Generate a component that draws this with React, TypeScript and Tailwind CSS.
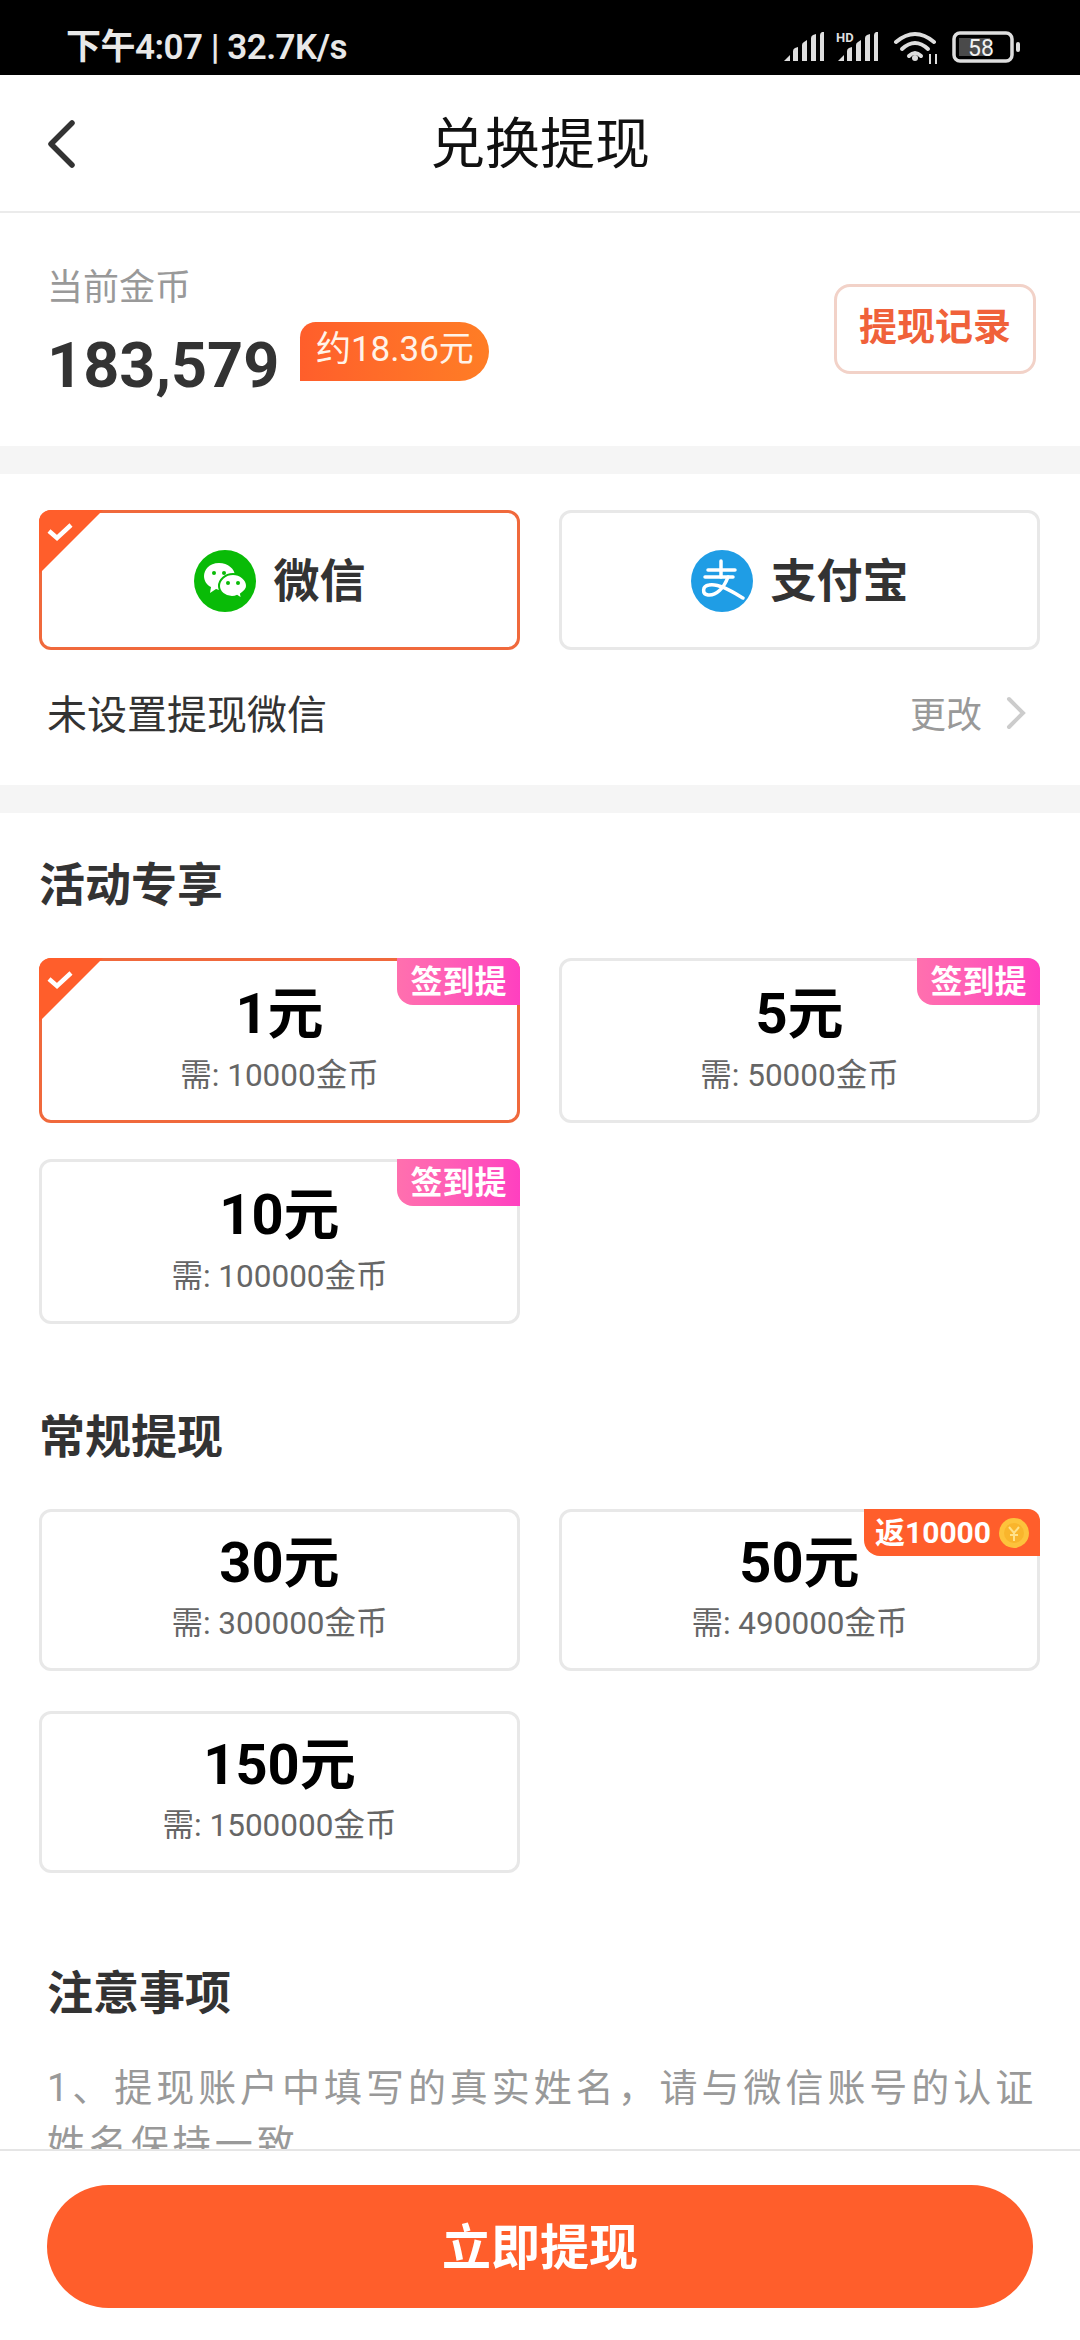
import type { ReactNode } from 'react'

const font = 'font-["Roboto","Noto_Sans_CJK_SC",sans-serif]'

function SignalBars({ x = 0 }: { x?: number }) {
  return (
    <g fill="#dedede" transform={`translate(${x} 0)`}>
      <path d="M0 29 L6 23 V29 Z" />
      <path d="M9 29 V19 Q9 17 11 16 L14 15 V29 Z" />
      <path d="M18 29 V13 Q18 11 20 10 L23 8 V29 Z" />
      <path d="M27 29 V6 Q27 4 29 3 L32 2 V29 Z" />
      <path d="M36 29 V3 Q36 1 38 0 L40 0 V29 Z" />
    </g>
  )
}

function StatusIcons() {
  return (
    <svg width="240" height="40" viewBox="0 0 240 40" className="shrink-0">
      <g transform="translate(4 2)">
        <SignalBars />
      </g>
      <g transform="translate(58 2)">
        <SignalBars />
      </g>
      <text x="56" y="12" fill="#dedede" fontSize="13" fontWeight="700" fontFamily="Roboto, sans-serif">
        HD
      </text>
      <g fill="none" stroke="#dedede" strokeWidth="4" strokeLinecap="round">
        <path d="M116 12 Q135 -4 154 12" />
        <path d="M122 19 Q135 7 148 19" />
        <path d="M129 26 Q135 20 141 26" />
      </g>
      <circle cx="135" cy="28" r="3" fill="#dedede" />
      <path d="M150 24 V34 M156 24 V34" stroke="#dedede" strokeWidth="2" />
      <rect x="174" y="3" width="58" height="28" rx="6" fill="none" stroke="#dedede" strokeWidth="3.5" />
      <rect x="179" y="8" width="31" height="18" fill="#4a4a4a" />
      <rect x="236" y="12" width="4" height="10" rx="2" fill="#dedede" />
      <text x="188" y="26" fill="#f2f2f2" fontSize="23" fontFamily="Roboto, sans-serif">
        58
      </text>
    </svg>
  )
}

function WechatIcon() {
  return (
    <svg width="62" height="62" viewBox="0 0 62 62" className="shrink-0">
      <circle cx="31" cy="31" r="31" fill="#09bb07" />
      <path d="M25 13 C15 13 10 20 10 26 C10 31 13 35 17 37 L16 43 L22 39 C23 39.500 25 40 27 40 C36 40 41 33 41 26 C41 19 34 13 25 13 Z" fill="#fff" />
      <circle cx="20" cy="23" r="2" fill="#09bb07" />
      <circle cx="30" cy="23" r="2" fill="#09bb07" />
      <path d="M39 24 C31 24 25 30 25 36 C25 42 31 47 38 47 C40 47 41 47 43 46 L48 49 L47 44 C50 42 53 39 53 36 C53 29 46 24 39 24 Z" fill="#fff" stroke="#09bb07" strokeWidth="2" />
      <circle cx="34" cy="33" r="2" fill="#09bb07" />
      <circle cx="44" cy="33" r="2" fill="#09bb07" />
    </svg>
  )
}

function AlipayIcon() {
  return (
    <svg width="62" height="62" viewBox="0 0 62 62" className="shrink-0">
      <circle cx="31" cy="31" r="31" fill="#1f9de5" />
      <g fill="none" stroke="#fff" strokeWidth="3.500" strokeLinecap="round">
        <path d="M17 20 H44" />
        <path d="M30 11 V27" />
        <path d="M14 27 H42" />
        <path d="M37 27 C33 38 25 46 17 45 C11 44 11 36 18 35 C27 33 40 41 52 48" />
      </g>
    </svg>
  )
}

function CornerCheck() {
  return (
    <svg
      width="64"
      height="64"
      viewBox="0 0 64 64"
      className="absolute -left-[3px] -top-[3px] rounded-tl-[12px]"
    >
      <path d="M0 0 H64 L0 64 Z" fill="#ff5e2b" />
      <path d="M10 21 L18 28 L32 15" fill="none" stroke="#fff" strokeWidth="4.500" />
    </svg>
  )
}

function SelectCard({ active, children, className }: { active?: boolean; children: ReactNode; className: string }) {
  return (
    <div
      className={`relative rounded-[12px] border-[3px] bg-white ${active ? 'border-[#f0693c]' : 'border-[#e8e8e8]'} ${className}`}
    >
      {active && <CornerCheck />}
      {children}
    </div>
  )
}

function SignTag() {
  return (
    <div className="absolute -right-[3px] -top-[3px] flex h-[47px] w-[123px] items-center justify-center rounded-tr-[12px] rounded-bl-[16px] bg-gradient-to-r from-[#ff70ae] to-[#ff3fc0] text-[32px] font-bold text-white">
      签到提
    </div>
  )
}

function ReturnTag() {
  return (
    <div className="absolute -right-[3px] -top-[3px] flex h-[47px] w-[176px] items-center justify-center gap-[8px] rounded-tr-[12px] rounded-bl-[16px] bg-[#ff5e2b] text-[30px] font-bold text-white">
      返10000
      <svg width="30" height="30" viewBox="0 0 30 30" className="shrink-0">
        <circle cx="15" cy="15" r="15" fill="#fdc33c" />
        <circle cx="15" cy="15" r="10" fill="#f9b52c" />
        <path d="M10 9 L15 15 L20 9 M15 15 V23 M11 17 H19" fill="none" stroke="#ffe28a" strokeWidth="2" />
      </svg>
    </div>
  )
}

function AmountCard({
  amount,
  need,
  active,
  tag,
  compact,
}: {
  amount: string
  need: string
  active?: boolean
  tag?: ReactNode
  compact?: boolean
}) {
  return (
    <SelectCard active={active} className={compact ? 'h-[162px] pt-[21px]' : 'h-[165px] pt-[23px]'}>
      {tag}
      <div className="text-center text-[56px] leading-[60px] font-bold text-black">{amount}</div>
      <div className={`text-center text-[31.5px] leading-[40px] text-[#666] ${compact ? 'mt-[11px]' : 'mt-[12px]'}`}>
        需: {need}金币
      </div>
    </SelectCard>
  )
}

export default function App() {
  return (
    <div className={`flex h-[2340px] w-[1080px] flex-col overflow-hidden bg-white ${font}`}>
      <div className="flex h-[75px] shrink-0 items-center justify-between bg-black pl-[66px] pr-[60px] pt-[24px]">
        <span className="-mt-[4px] text-[35px] leading-none font-semibold tracking-[-0.5px] text-[#e8e8e8]">
          下午4:07 | 32.7K/s
        </span>
        <StatusIcons />
      </div>

      <div className="relative flex h-[138px] shrink-0 items-center justify-center border-b-2 border-[#ebebeb] pt-[3px]">
        <svg width="30" height="48" viewBox="0 0 30 48" className="absolute left-[46px] top-[45px]">
          <path d="M26 3 L5 24 L26 45" fill="none" stroke="#333" strokeWidth="5.500" strokeLinecap="round" strokeLinejoin="round" />
        </svg>
        <span className="text-[55px] text-[#111]">兑换提现</span>
      </div>

      <div className="flex-1 overflow-hidden">
        <div className="flex h-[233px] justify-between pl-[47px] pr-[44px] pt-[50px]">
          <div>
            <div className="text-[36px] leading-[50px] text-[#999]">当前金币</div>
            <div className="mt-[9px] flex items-start">
              <span className="mt-[8px] text-[63px] leading-[72px] font-bold text-[#333]">183,579</span>
              <span className="ml-[21px] flex h-[59px] w-[189px] items-center justify-center rounded-tl-[16px] rounded-r-[30px] bg-gradient-to-r from-[#ff5e2b] to-[#ff7d25] pb-[2px] text-[35px] text-[#fff3e8]">
                约18.36元
              </span>
            </div>
          </div>
          <div className="mt-[21px] flex h-[90px] w-[202px] items-center justify-center rounded-[16px] border-[3px] border-[#f2d2c8] pb-[3px] text-[38px] font-bold text-[#f0613a]">
            提现记录
          </div>
        </div>

        <div className="h-[28px] bg-[#f5f5f5]" />

        <div className="h-[311px] pt-[36px]">
          <div className="grid grid-cols-[481px_481px] gap-x-[39px] pl-[39px]">
            <SelectCard active className="flex h-[140px] items-center justify-center gap-[18px] pt-[2px]">
              <WechatIcon />
              <span className="text-[46px] font-bold text-[#333]">微信</span>
            </SelectCard>
            <SelectCard className="flex h-[140px] items-center justify-center gap-[18px] pt-[2px]">
              <AlipayIcon />
              <span className="text-[46px] font-bold text-[#333]">支付宝</span>
            </SelectCard>
          </div>
          <div className="mt-[41px] flex items-center justify-between pl-[47px] pr-[54px]">
            <span className="text-[40px] leading-[50px] text-[#333]">未设置提现微信</span>
            <div className="flex items-center gap-[24px]">
              <span className="text-[36px] leading-[50px] text-[#999]">更改</span>
              <svg width="20" height="34" viewBox="0 0 20 34" className="-mt-[6px]">
                <path d="M3 3 L17 17 L3 31" fill="none" stroke="#ccc" strokeWidth="4" strokeLinecap="round" />
              </svg>
            </div>
          </div>
        </div>

        <div className="h-[28px] bg-[#f5f5f5]" />

        <div className="pl-[39px] pt-[42px]">
          <div className="text-[46px] leading-[60px] font-bold text-[#333]">活动专享</div>
          <div className="mt-[43px] grid grid-cols-[481px_481px] gap-x-[39px] gap-y-[36px]">
            <AmountCard amount="1元" need="10000" active tag={<SignTag />} />
            <AmountCard amount="5元" need="50000" tag={<SignTag />} />
            <AmountCard amount="10元" need="100000" tag={<SignTag />} />
          </div>

          <div className="mt-[83px] text-[46px] leading-[60px] font-bold text-[#333]">常规提现</div>
          <div className="mt-[42px] grid grid-cols-[481px_481px] gap-x-[39px] gap-y-[40px]">
            <AmountCard compact amount="30元" need="300000" />
            <AmountCard compact amount="50元" need="490000" tag={<ReturnTag />} />
            <AmountCard compact amount="150元" need="1500000" />
          </div>
        </div>

        <div className="pl-[47px] pr-[36px] pt-[90px]">
          <div className="text-[46px] leading-[60px] font-bold text-[#333]">注意事项</div>
          <p className="mt-[37px] text-[38px] leading-[56px] tracking-[3.95px] text-[#999]">
            1、提现账户中填写的真实姓名，请与微信账号的认证姓名保持一致
          </p>
        </div>
      </div>

      <div className="h-[191px] shrink-0 border-t-2 border-[#e5e5e5] bg-white px-[47px] pt-[34px]">
        <div className="flex h-[123px] items-center justify-center rounded-full bg-[#ff5e2b] pt-[4px] text-[49px] font-bold text-white">
          立即提现
        </div>
      </div>
    </div>
  )
}
